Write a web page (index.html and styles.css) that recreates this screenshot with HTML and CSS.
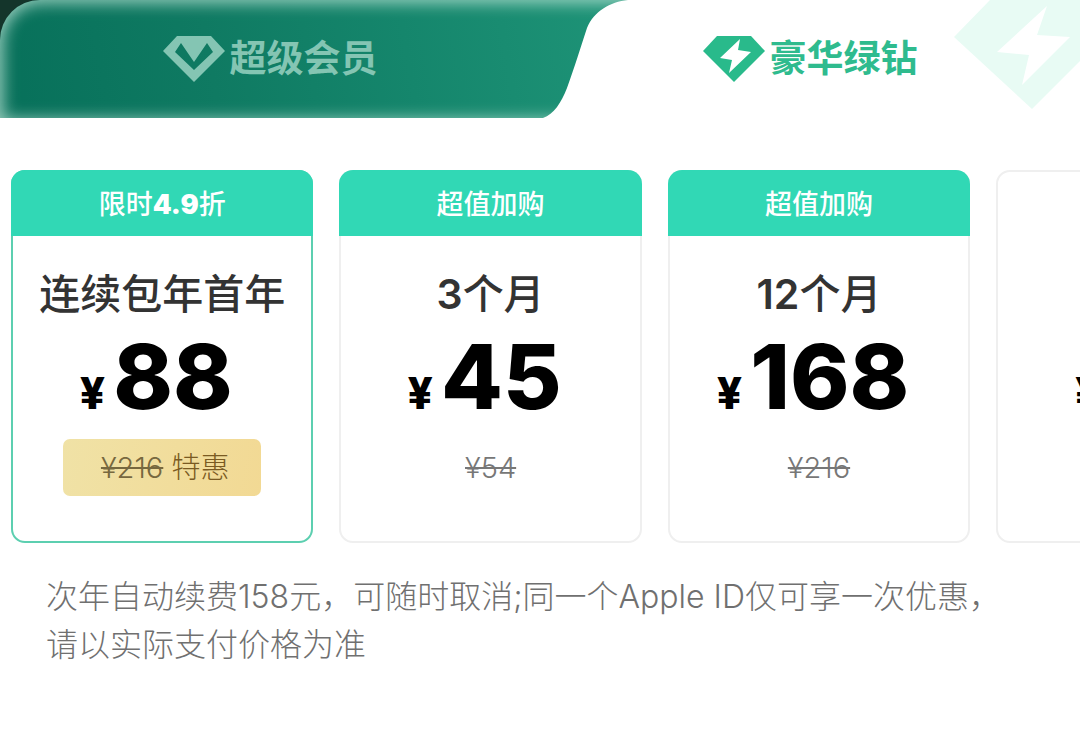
FILE: index.html
```html
<!DOCTYPE html>
<html lang="zh-CN">
<head>
  <meta charset="UTF-8">
  <meta name="viewport" content="width=device-width, initial-scale=1">
  <title>豪华绿钻</title>
  <link rel="stylesheet" href="styles.css">
</head>
<body>
  <nav class="tabs">
    <div class="tabs-bg"></div>
    <button type="button" class="tab tab-super">
      <svg class="tab-icon" viewBox="0 0 62 46" aria-hidden="true">
        <path fill="currentColor" fill-rule="evenodd" d="M14 0H48L62 15L31 46L0 15ZM18 7L12 16L31 34L50 16L44 7L31 26Z"/>
      </svg>
      <span>超级会员</span>
    </button>
    <button type="button" class="tab tab-green active">
      <svg class="tab-curve" viewBox="0 0 90 118" aria-hidden="true">
        <path fill="#fff" d="M90 0H88C70 2 54 11 47 28C40 49 35 66 27 88C21 103 14 114 3 118H90Z"/>
      </svg>
      <svg class="tab-icon" viewBox="0 0 62 46" aria-hidden="true">
        <path fill="#29ba8b" d="M14 0H48L62 15L31 46L0 15Z"/>
        <path fill="#fff" d="M37 3L17 22L29 24L26 37L48 16L35 14Z"/>
      </svg>
      <span>豪华绿钻</span>
      <svg class="tab-mark" viewBox="0 0 126 110" aria-hidden="true">
        <path fill="#e8fbf4" d="M0 37L36 0H126V61L78 109Z"/>
        <path fill="#fff" d="M93 6L43 52L75 55L68 85L116 37L83 35Z"/>
      </svg>
    </button>
  </nav>

  <main>
    <div class="plans">
      <button type="button" class="plan selected">
        <span class="badge">限时<b>4.9</b>折</span>
        <span class="name">连续包年首年</span>
        <span class="price"><small>¥</small>88</span>
        <span class="old tag"><s>¥216</s> 特惠</span>
      </button>
      <button type="button" class="plan">
        <span class="badge">超值加购</span>
        <span class="name"><b>3</b>个月</span>
        <span class="price"><small>¥</small>45</span>
        <span class="old"><s>¥54</s></span>
      </button>
      <button type="button" class="plan">
        <span class="badge">超值加购</span>
        <span class="name"><b>12</b>个月</span>
        <span class="price"><small>¥</small>168</span>
        <span class="old"><s>¥216</s></span>
      </button>
      <button type="button" class="plan">
        <span class="badge empty"></span>
        <span class="name"></span>
        <span class="price"><small>¥</small>18</span>
      </button>
    </div>
    <p class="note">次年自动续费158元，可随时取消;同一个Apple ID仅可享一次优惠，请以实际支付价格为准</p>
  </main>
</body>
</html>
```

FILE: styles.css
```css
* { box-sizing: border-box; }

body {
  margin: 0;
  background: #fff;
  font-family: Inter, "Noto Sans CJK SC", sans-serif;
  overflow-x: hidden;
}

button {
  padding: 0;
  border: 0;
  background: none;
  font-family: inherit;
  cursor: pointer;
}

/* tabs */
.tabs {
  position: relative;
  display: grid;
  grid-template-columns: 1fr 1fr;
  height: 118px;
  background: #14352b;
  overflow: hidden;
}
.tabs-bg {
  position: absolute;
  inset: 0;
  border-radius: 40px 0 0 0;
  background: linear-gradient(80deg, #07705a 0, #0f7a62 20%, #15866c 38%, #1d9276 56%);
  box-shadow: inset 2px 2px 16px 1px rgba(200, 235, 222, 0.75);
}
.tab {
  position: relative;
  display: flex;
  align-items: center;
  justify-content: center;
  gap: 5px;
  font-size: 37px;
  font-weight: 700;
  line-height: 54px;
}
.tab-super { color: #84c5b3; }
.tab-green {
  color: #2fbb8e;
  background: linear-gradient(to right, transparent 89px, #fff 89px);
}
.tab-icon { width: 62px; height: 46px; }
.tab-curve {
  position: absolute;
  left: 0;
  top: 0;
  width: 90px;
  height: 118px;
}
.tab-mark {
  position: absolute;
  right: 0;
  top: 0;
  width: 126px;
  height: 110px;
}

/* plans */
.plans {
  display: flex;
  gap: 26px;
  padding: 52px 0 0 11px;
  overflow: hidden;
}
.plan {
  flex: 0 0 28vw;
  display: flex;
  flex-direction: column;
  align-items: center;
  padding-bottom: 45px;
  border: 2px solid #efefef;
  border-radius: 14px;
  background: #fff;
  color: #000;
}
.plan.selected { border-color: #5ccfb0; }
.badge {
  align-self: stretch;
  height: 66px;
  margin: -2px -2px 0;
  border-radius: 14px 14px 0 0;
  background: #31d8b5;
  color: #fff;
  font-size: 27px;
  font-weight: 500;
  line-height: 70px;
}
.badge b { font-weight: 900; }
.badge.empty { background: none; }
.name {
  height: 60px;
  margin-top: 28px;
  color: #333;
  font-size: 41px;
  font-weight: 500;
  line-height: 60px;
}
.name b { font-weight: 600; }
.price {
  height: 100px;
  padding-right: 12px;
  font-size: 90px;
  font-weight: 800;
  line-height: 106px;
}
.price small { margin-right: 8px; font-size: 44px; line-height: 1; }
.old {
  height: 57px;
  margin-top: 15px;
  color: #777;
  font-size: 29px;
  font-weight: 300;
  line-height: 57px;
}
.tag {
  padding: 0 32px 0 38px;
  border-radius: 7px;
  background: linear-gradient(100deg, #f0e2a6, #f2d994);
  color: #7a5a22;
}
.tag s { color: #77683f; }

.note {
  margin: 30px 70px 0 46px;
  color: #707070;
  font-size: 32px;
  font-weight: 300;
  line-height: 48px;
}
```
